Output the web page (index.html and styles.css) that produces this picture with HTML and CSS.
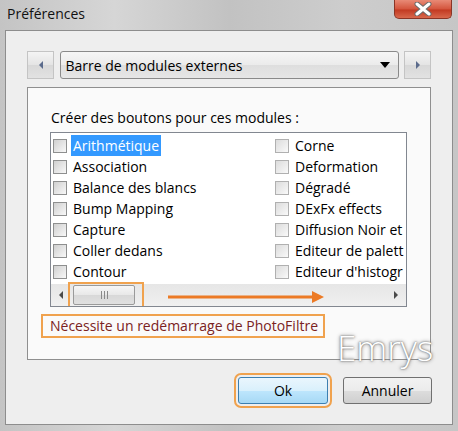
FILE: index.html
```html
<!DOCTYPE html>
<html lang="fr">
<head>
  <meta charset="UTF-8" />
  <title>Préférences</title>
  <link rel="stylesheet" href="styles.css">
</head>
<body>

  <div class="window">
    <div class="titlebar">
      <span class="title">Préférences</span>
      <div class="close">
        <svg width="22" height="14" viewBox="0 0 22 14">
          <path d="M5 2 L17 12 M17 2 L5 12" stroke="#6a6a6a" stroke-width="5" stroke-linecap="round"/>
          <path d="M5 2 L17 12 M17 2 L5 12" stroke="#fff" stroke-width="3" stroke-linecap="round"/>
        </svg>
      </div>
    </div>

    <div class="frame">
      <div class="nav">
        <div class="nav-btn">
          <svg width="6" height="8" viewBox="0 0 6 8"><path d="M5 0 L1 4 L5 8 Z" fill="#5b6b8c"/></svg>
        </div>
        <div class="combo">
          <span>Barre de modules externes</span>
          <svg width="10" height="6" viewBox="0 0 10 6"><path d="M0 0 H10 L5 6 Z" fill="#000"/></svg>
        </div>
        <div class="nav-btn">
          <svg width="6" height="8" viewBox="0 0 6 8"><path d="M1 0 L5 4 L1 8 Z" fill="#5b6b8c"/></svg>
        </div>
      </div>

      <div class="panel">
        <div class="label">Créer des boutons pour ces modules :</div>

        <div class="listbox">
          <div class="columns">
            <ul class="col">
              <li><span class="check"></span><span class="item selected">Arithmétique</span></li>
              <li><span class="check"></span><span class="item">Association</span></li>
              <li><span class="check"></span><span class="item">Balance des blancs</span></li>
              <li><span class="check"></span><span class="item">Bump Mapping</span></li>
              <li><span class="check"></span><span class="item">Capture</span></li>
              <li><span class="check"></span><span class="item">Coller dedans</span></li>
              <li><span class="check"></span><span class="item">Contour</span></li>
            </ul>
            <ul class="col col-right">
              <li><span class="check"></span><span class="item">Corne</span></li>
              <li><span class="check"></span><span class="item">Deformation</span></li>
              <li><span class="check"></span><span class="item">Dégradé</span></li>
              <li><span class="check"></span><span class="item">DExFx effects</span></li>
              <li><span class="check"></span><span class="item">Diffusion Noir et</span></li>
              <li><span class="check"></span><span class="item">Editeur de palett</span></li>
              <li><span class="check"></span><span class="item">Editeur d'histogr</span></li>
            </ul>
          </div>

          <div class="hscroll">
            <svg class="sb-arrow" width="5" height="8" viewBox="0 0 5 8"><path d="M4 0 L0 4 L4 8 Z" fill="#4a4a4a"/></svg>
            <div class="thumb">
              <svg width="9" height="8" viewBox="0 0 9 8">
                <path d="M1.5 0 V8 M4.5 0 V8 M7.5 0 V8" stroke="#8a8a8a" stroke-width="1"/>
              </svg>
            </div>
            <svg class="sb-arrow" width="5" height="8" viewBox="0 0 5 8"><path d="M1 0 L5 4 L1 8 Z" fill="#4a4a4a"/></svg>
          </div>

          <div class="mark-thumb"></div>
          <svg class="mark-arrow" width="158" height="12" viewBox="0 0 158 12">
            <path d="M0 6 H146" stroke="#ec7a25" stroke-width="3"/>
            <path d="M144 0 L156 6 L144 12 Z" fill="#ec7a25"/>
          </svg>
        </div>

        <div class="note">Nécessite un redémarrage de PhotoFiltre</div>
      </div>

      <div class="buttons">
        <div class="btn btn-ok">Ok</div>
        <div class="btn">Annuler</div>
      </div>

      <div class="watermark">Emrys</div>
    </div>
  </div>

</body>
</html>
```

FILE: styles.css
```css
:root {
  --orange: #f0a24e;
  --border-gray: #8d8d8d;
}

body {
  margin: 0;
  padding: 0;
  font-family: 'Open Sans', 'Noto Sans', sans-serif;
  font-size: 14px;
  color: #000;
}

.window {
  width: 458px;
  height: 431px;
  background: linear-gradient(to right, #c4c4c4, #d6d6d6 25%, #c2c2c2 50%, #cdcdcd 75%, #c6c6c6);
  overflow: hidden;
}

.titlebar {
  height: 30px;
  display: flex;
  justify-content: space-between;
  align-items: flex-start;
}

.title {
  font-size: 14px;
  margin: 4px 0 0 7px;
  color: #111;
}

.close {
  width: 56px;
  height: 18px;
  margin-right: 6px;
  border: 1px solid #8a3526;
  border-top: none;
  border-radius: 0 0 5px 5px;
  background: linear-gradient(#e88a76, #d4553d 50%, #c23a22 55%, #d8684c);
  display: flex;
  align-items: center;
  justify-content: center;
}

.frame {
  position: relative;
  box-sizing: border-box;
  margin-left: 5px;
  width: 448px;
  height: 395px;
  border: 1px solid var(--border-gray);
  background-color: #eeeeee;
  padding: 20px 20px 0 21px;
}

.nav {
  display: flex;
  justify-content: space-between;
  width: 404px;
  height: 28px;
}

.nav-btn {
  box-sizing: border-box;
  width: 27px;
  height: 28px;
  border: 1px solid #c4c4c4;
  background: linear-gradient(#f4f4f4, #e4e4e4 50%, #d8d8d8 51%, #e2e2e2);
  display: flex;
  align-items: center;
  justify-content: center;
}

.combo {
  box-sizing: border-box;
  width: 339px;
  height: 28px;
  border: 1px solid #8a8a8a;
  border-radius: 3px;
  background: linear-gradient(#f6f6f6, #ebebeb 50%, #dedede 51%, #e6e6e6);
  display: flex;
  align-items: center;
  justify-content: space-between;
  padding: 0 8px 0 5px;
}

.panel {
  box-sizing: border-box;
  margin-top: 8px;
  width: 404px;
  height: 273px;
  border: 1px solid #8f8f8f;
  background-color: #fafafa;
  padding: 21px 0 0 22px;
}

.label {
  margin-left: 1px;
  height: 23px;
  line-height: 18px;
}

.listbox {
  position: relative;
  box-sizing: border-box;
  width: 357px;
  height: 175px;
  border: 1px solid #828790;
  background-color: #fff;
  overflow: hidden;
}

.columns {
  display: flex;
  height: 149px;
  padding: 2px 0 0 2px;
}

.col {
  list-style: none;
  margin: 0;
  padding: 0;
  width: 222px;
  flex-shrink: 0;
}

.col li {
  display: flex;
  align-items: center;
  height: 21px;
  white-space: nowrap;
}

.check {
  box-sizing: border-box;
  width: 14px;
  height: 14px;
  border: 1px solid #8e8f8f;
  background: linear-gradient(135deg, #d0d0d0, #ececec 70%, #f8f8f8);
  flex-shrink: 0;
}

.col-right .check {
  border-color: #b0b0b0;
  background: linear-gradient(135deg, #dcdcdc, #f0f0f0 70%, #fafafa);
}

.item {
  margin-left: 4px;
  padding: 0 2px 0 2px;
  line-height: 21px;
}

.selected {
  background-color: #3399ff;
  color: #fff;
}

.hscroll {
  display: flex;
  align-items: center;
  height: 22px;
  background: linear-gradient(to bottom, #e6e6e6, #f0f0f0);
  padding: 0 8px 0 8px;
}

.sb-arrow {
  flex-shrink: 0;
}

.hscroll .sb-arrow:last-child {
  margin-left: auto;
}

.thumb {
  box-sizing: border-box;
  width: 62px;
  height: 20px;
  margin-left: 9px;
  border: 1px solid #9a9a9a;
  border-radius: 2px;
  background: linear-gradient(#f6f6f6, #e8e8e8 50%, #d8d8d8 51%, #e0e0e0);
  display: flex;
  align-items: center;
  justify-content: center;
}

.mark-thumb {
  position: absolute;
  left: 17px;
  top: 149px;
  width: 72px;
  height: 23px;
  border: 2px solid var(--orange);
}

.mark-arrow {
  position: absolute;
  left: 117px;
  top: 158px;
}

.note {
  box-sizing: border-box;
  margin: 7px 0 0 -9px;
  width: 284px;
  height: 24px;
  border: 2px solid var(--orange);
  padding-left: 7px;
  line-height: 20px;
  white-space: nowrap;
  color: #7a2222;
}

.buttons {
  display: flex;
  justify-content: flex-end;
  gap: 15px;
  margin-top: 17px;
  width: 405px;
}

.btn {
  box-sizing: border-box;
  width: 89px;
  height: 27px;
  border: 1px solid #707070;
  border-radius: 3px;
  background: linear-gradient(#f2f2f2, #ebebeb 50%, #dddddd 51%, #cfcfcf);
  display: flex;
  align-items: center;
  justify-content: center;
}

.btn-ok {
  width: 90px;
  border-color: #3c7fb1;
  background: linear-gradient(#eaf6fd, #d9f0fc 50%, #bee6fd 51%, #a7d9f5);
  outline: 2px solid var(--orange);
  outline-offset: 2px;
}

.watermark {
  position: absolute;
  left: 331px;
  top: 293px;
  font-size: 35px;
  font-weight: 300;
  color: #fff;
  text-shadow: 0 0 2px #555, 0 0 4px #888;
}
```
